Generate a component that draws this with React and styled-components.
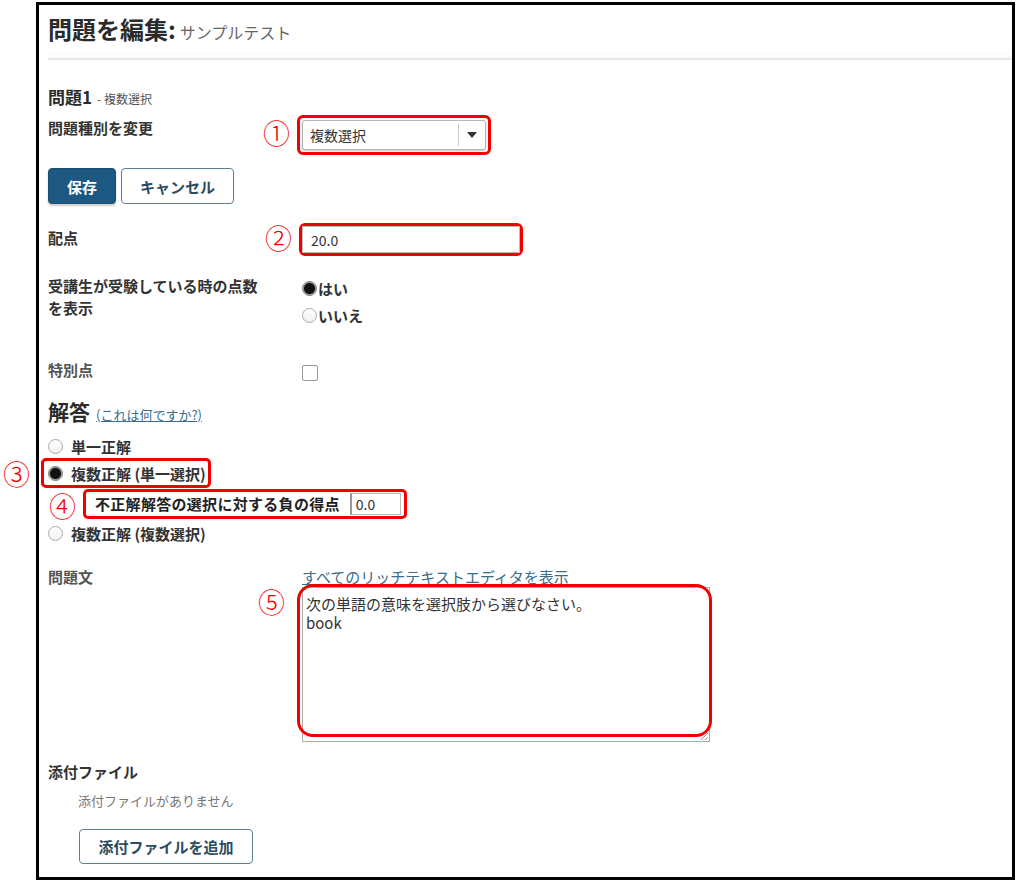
import React from "react";
import styled, { createGlobalStyle } from "styled-components";

const Global = createGlobalStyle`
  html, body { margin: 0; padding: 0; background: #fff; }
  body {
    font-family: "Noto Sans CJK JP", "Noto Sans", sans-serif;
    color: #333;
  }
  * { box-sizing: border-box; }
`;

const Frame = styled.div`
  margin: 2px 0 0 36px;
  width: 979px;
  height: 878px;
  border: 3px solid #000;
  overflow: visible;
`;

const Header = styled.header`
  margin-left: 9px;
  height: 55px;
  padding-top: 8px;
  border-bottom: 2px solid #e6e6e6;
  background: linear-gradient(to bottom, #fff 82%, #f9f9f9);
  display: flex;
  align-items: baseline;
  gap: 4px;
`;

const Title = styled.h1`
  margin: 0;
  font-size: 24px;
  line-height: 32px;
  font-weight: 700;
  color: #2a2a2a;
`;

const TitleSub = styled.span`
  font-size: 16px;
  font-weight: 400;
  color: #666;
`;

const Body = styled.div`
  padding-left: 9px;
`;

const QuestionTitle = styled.h2`
  margin: 25px 0 0;
  height: 24px;
  font-size: 17px;
  line-height: 24px;
  font-weight: 700;
  color: #2a2a2a;
  display: flex;
  align-items: baseline;
  gap: 5px;
`;

const QuestionSub = styled.span`
  font-size: 12px;
  line-height: 24px;
  font-weight: 400;
  color: #555;
`;

const Row = styled.div`
  display: grid;
  grid-template-columns: 254px 1fr;
  align-items: start;
  margin-top: ${(p) => p.$mt || 0}px;
`;

const Label = styled.div`
  font-size: 15px;
  line-height: 22px;
  font-weight: 700;
  color: ${(p) => (p.$muted ? "#555" : "#333")};
  padding-top: ${(p) => p.$pt || 0}px;
`;

const Highlight = styled.div`
  position: relative;
  display: ${(p) => (p.$block ? "flex" : "inline-flex")};
  align-items: center;
  width: max-content;
  height: ${(p) => (p.$h ? p.$h + "px" : "auto")};
  border: 3px solid #f20000;
  border-radius: ${(p) => p.$radius || 6}px;
  padding: ${(p) => p.$pad || "0"};
  margin-left: ${(p) => p.$ml || 0}px;
  margin-top: ${(p) => p.$mt || 0}px;
`;

const Overlay = styled.div`
  position: absolute;
  top: -3px;
  left: -5px;
  right: -2px;
  bottom: 5px;
  border: 3px solid #f20000;
  border-radius: 16px;
  pointer-events: none;
`;

const Badge = styled.span`
  position: absolute;
  left: ${(p) => p.$x}px;
  top: ${(p) => p.$y}px;
  font-family: "Noto Sans CJK JP", sans-serif;
  font-size: 27px;
  line-height: 27px;
  font-weight: 300;
  color: #f20000;
`;

const Select = styled.div`
  width: 184px;
  height: 30px;
  border: 1px solid #b5b5b5;
  border-radius: 3px;
  box-shadow: 0 1px 2px rgba(0, 0, 0, 0.25);
  background: #fff;
  display: flex;
  align-items: center;
  font-size: 14px;
  color: #333;
  padding-left: 7px;
`;

const SelectText = styled.span`
  flex: 1;
`;

const SelectArrow = styled.span`
  width: 27px;
  height: 22px;
  border-left: 1px solid #c8c8c8;
  display: flex;
  align-items: center;
  justify-content: center;
  &::after {
    content: "";
    border-left: 5px solid transparent;
    border-right: 5px solid transparent;
    border-top: 6px solid #333;
  }
`;

const ButtonBar = styled.div`
  display: flex;
  gap: 5px;
  margin-top: 13px;
`;

const Button = styled.button`
  height: ${(p) => p.$h || 36}px;
  padding: 0 ${(p) => p.$px || 16}px;
  font-family: inherit;
  font-size: 15px;
  font-weight: 700;
  border-radius: 4px;
  border: 1px solid ${(p) => (p.$primary ? "#1b4f72" : "#5d7f95")};
  background: ${(p) => (p.$primary ? "#1d5882" : "#fff")};
  color: ${(p) => (p.$primary ? "#fff" : "#2b4b5f")};
  box-shadow: ${(p) => (p.$primary ? "0 2px 2px rgba(0,0,0,0.2)" : "none")};
  margin-left: ${(p) => p.$ml || 0}px;
  margin-top: ${(p) => p.$mt || 0}px;
  width: ${(p) => (p.$w ? p.$w + "px" : "auto")};
`;

const TextInput = styled.div`
  width: ${(p) => p.$w}px;
  height: ${(p) => p.$h}px;
  border: 1px solid #bbb;
  border-left: ${(p) => (p.$thick ? "2px solid #999" : "1px solid #bbb")};
  background: #fff;
  font-size: 14px;
  color: #333;
  display: flex;
  align-items: center;
  padding-left: ${(p) => p.$pl || 6}px;
`;

const RadioGroup = styled.div`
  display: flex;
  flex-direction: column;
`;

const RadioLine = styled.label`
  display: flex;
  align-items: center;
  height: 27px;
  gap: 1px;
  font-size: 15px;
  font-weight: 700;
  color: #333;
`;

const RadioDot = styled.span`
  width: 15px;
  height: 15px;
  border-radius: 50%;
  border: 1px solid ${(p) => (p.$checked ? "#777" : "#aaa")};
  background: ${(p) =>
    p.$checked
      ? "radial-gradient(circle, #111 0 5px, #555 5.5px, #ccc 6.5px)"
      : "linear-gradient(#fff, #f0f0f0)"};
  flex: none;
`;

const Checkbox = styled.span`
  width: 16px;
  height: 16px;
  border: 1px solid #999;
  border-radius: 2px;
  background: #fff;
  margin-top: 6px;
  display: block;
`;

const SectionTitle = styled.h3`
  margin: 16px 0 0;
  height: 28px;
  font-size: 21px;
  line-height: 28px;
  font-weight: 700;
  color: #2a2a2a;
  display: flex;
  align-items: baseline;
  gap: 6px;
`;

const HelpLink = styled.a`
  font-size: 13px;
  font-weight: 400;
  color: #3a6c8c;
  text-decoration: underline;
`;

const AnswerOption = styled.label`
  display: flex;
  align-items: center;
  gap: 8px;
  height: ${(p) => p.$h || 27}px;
  font-size: 15px;
  font-weight: 700;
  color: #333;
  margin-top: ${(p) => p.$mt || 0}px;
`;

const NegLabel = styled.span`
  font-size: 15px;
  line-height: 24px;
  font-weight: 700;
  letter-spacing: 0.3px;
  color: #222;
  margin-right: 10px;
`;

const EditorCol = styled.div`
  display: flex;
  flex-direction: column;
`;

const EditorLink = styled.a`
  font-size: 15px;
  line-height: 21px;
  color: #3a6c8c;
  text-decoration: underline;
`;

const TextAreaWrap = styled.div`
  position: relative;
  width: 408px;
  height: 155px;
`;

const TextArea = styled.div`
  width: 100%;
  height: 100%;
  border: 1px solid #aaa;
  padding: 6px 3px;
  font-size: 15px;
  line-height: 19px;
  color: #333;
  position: relative;
  &::after {
    content: "";
    position: absolute;
    right: 1px;
    bottom: 1px;
    width: 7px;
    height: 7px;
    background: linear-gradient(135deg, transparent 45%, #999 45%, #999 55%, transparent 55%, transparent 75%, #999 75%, #999 85%, transparent 85%);
  }
`;

const TextLine = styled.div`
  white-space: nowrap;
`;

const AttachTitle = styled.div`
  margin-top: 19px;
  font-size: 15px;
  line-height: 22px;
  font-weight: 700;
  color: #333;
`;

const AttachNote = styled.div`
  margin-top: 8px;
  padding-left: 30px;
  font-size: 13px;
  line-height: 20px;
  color: #777;
`;

export default function App() {
  return (
    <>
      <Global />
      <Frame>
        <Header>
          <Title>問題を編集:</Title>
          <TitleSub>サンプルテスト</TitleSub>
        </Header>
        <Body>
          <QuestionTitle>
            問題1 <QuestionSub>- 複数選択</QuestionSub>
          </QuestionTitle>

          <Row $mt={6}>
            <Label $pt={2}>問題種別を変更</Label>
            <Highlight $pad="2px" $ml={-5}>
              <Badge $x={-37} $y={1}>①</Badge>
              <Select>
                <SelectText>複数選択</SelectText>
                <SelectArrow />
              </Select>
            </Highlight>
          </Row>

          <ButtonBar>
            <Button $primary $px={18}>保存</Button>
            <Button $px={18}>キャンセル</Button>
          </ButtonBar>

          <Row $mt={19}>
            <Label $pt={4}>配点</Label>
            <Highlight $ml={-3}>
              <Badge $x={-37} $y={-2}>②</Badge>
              <TextInput $w={218} $h={27} $pl={8}>20.0</TextInput>
            </Highlight>
          </Row>

          <Row $mt={19}>
            <Label>
              受講生が受験している時の点数
              <br />
              を表示
            </Label>
            <RadioGroup>
              <RadioLine>
                <RadioDot $checked />
                はい
              </RadioLine>
              <RadioLine>
                <RadioDot />
                いいえ
              </RadioLine>
            </RadioGroup>
          </Row>

          <Row $mt={30}>
            <Label $muted>特別点</Label>
            <Checkbox />
          </Row>

          <SectionTitle>
            解答 <HelpLink>(これは何ですか?)</HelpLink>
          </SectionTitle>

          <AnswerOption $mt={8}>
            <RadioDot />
            単一正解
          </AnswerOption>
          <Highlight $block $h={30} $ml={-7} $mt={-2} $pad="0 2px 0 4px" $radius={5}>
            <Badge $x={-41} $y={-1}>③</Badge>
            <AnswerOption $h={24}>
              <RadioDot $checked />
              複数正解 (単一選択)
            </AnswerOption>
          </Highlight>
          <Highlight $block $h={30} $ml={35} $mt={1} $pad="0 3px 0 9px" $radius={5}>
            <Badge $x={-37} $y={0}>④</Badge>
            <NegLabel>不正解解答の選択に対する負の得点</NegLabel>
            <TextInput $w={51} $h={22} $thick $pl={4}>0.0</TextInput>
          </Highlight>
          <AnswerOption $mt={1}>
            <RadioDot />
            複数正解 (複数選択)
          </AnswerOption>

          <Row $mt={19}>
            <Label $muted>問題文</Label>
            <EditorCol>
              <EditorLink>すべてのリッチテキストエディタを表示</EditorLink>
              <TextAreaWrap>
                <TextArea>
                  <TextLine>次の単語の意味を選択肢から選びなさい。</TextLine>
                  <TextLine>book</TextLine>
                </TextArea>
                <Overlay>
                  <Badge $x={-42} $y={1}>⑤</Badge>
                </Overlay>
              </TextAreaWrap>
            </EditorCol>
          </Row>

          <AttachTitle>添付ファイル</AttachTitle>
          <AttachNote>添付ファイルがありません</AttachNote>
          <Button $ml={31} $mt={18} $h={35} $w={174}>添付ファイルを追加</Button>
        </Body>
      </Frame>
    </>
  );
}
